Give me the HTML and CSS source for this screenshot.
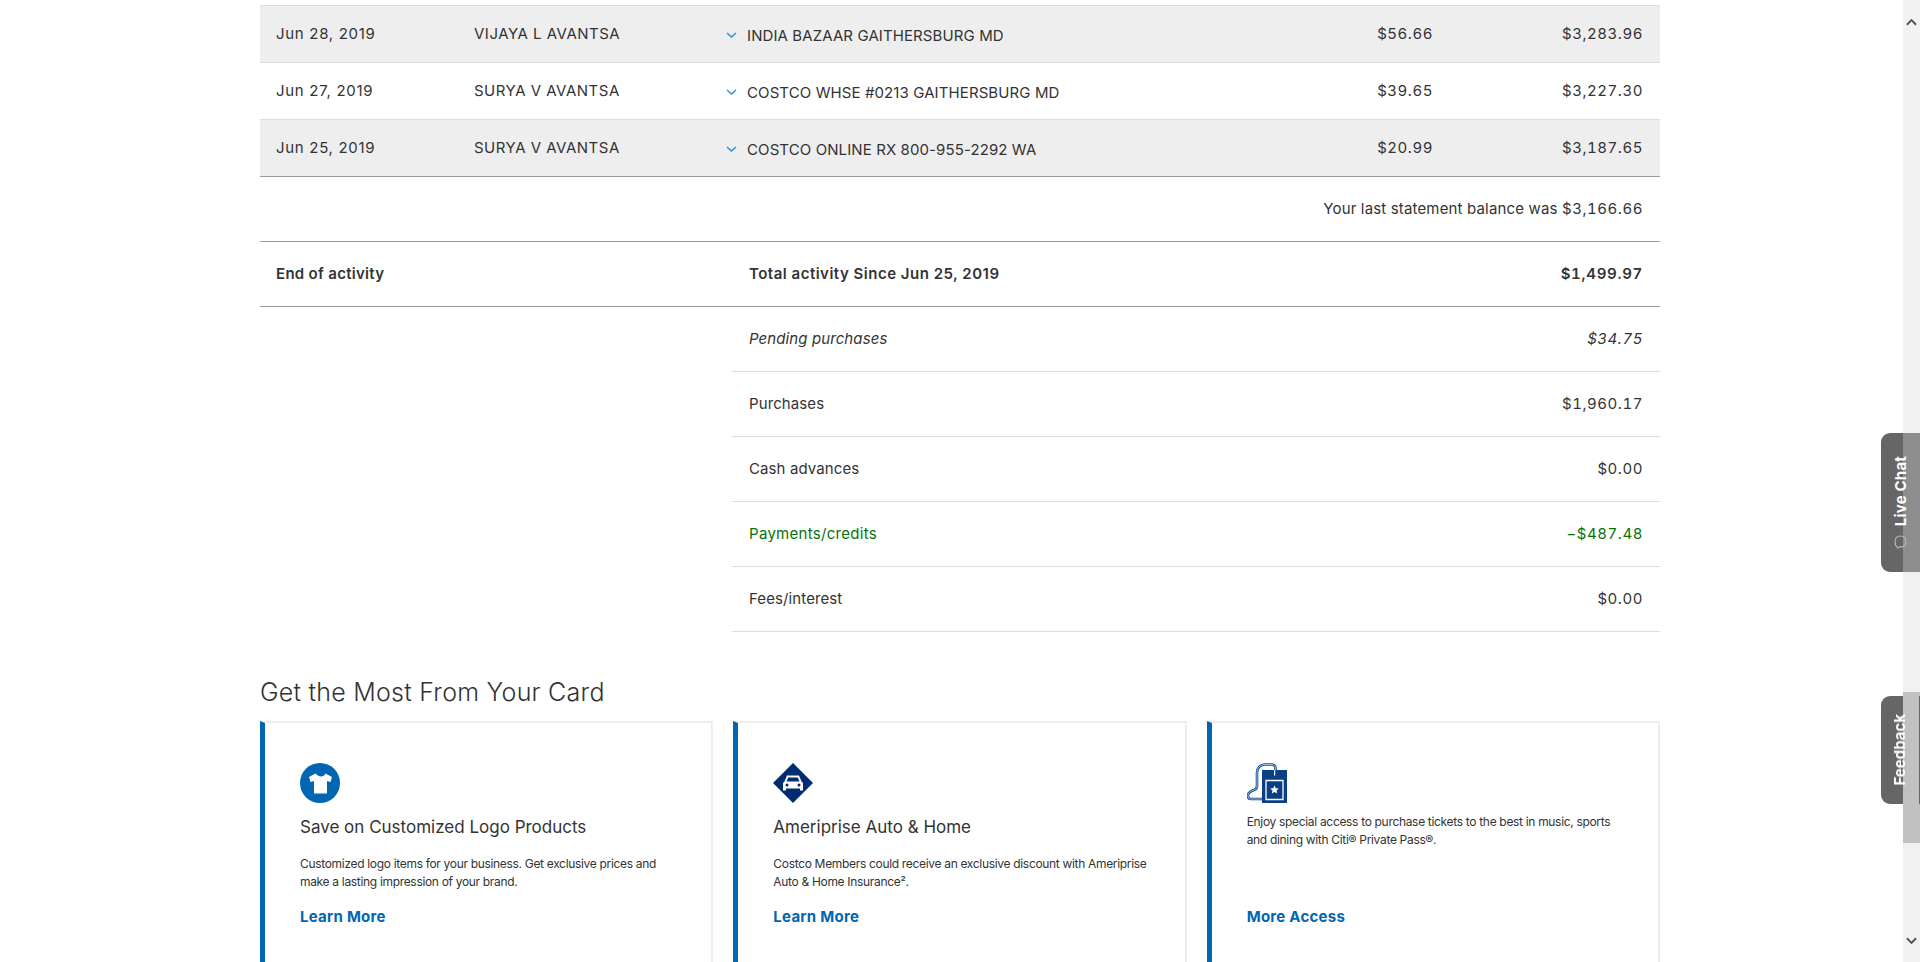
FILE: index.html
```html
<!DOCTYPE html>
<html lang="en">
<head>
    <meta charset="UTF-8">
    <title>Card Activity</title>
    <link rel="stylesheet" href="styles.css">
</head>
<body>

<div class="page">
    <main class="content">
        <!-- Posted transactions -->
        <div class="txn-list">
            <div class="txn-row shaded">
                <span class="txn-date">Jun 28, 2019</span>
                <span class="txn-name">VIJAYA L AVANTSA</span>
                <span class="txn-desc">
                    <svg class="chevron" viewBox="0 0 11 6"><path d="M1 1l4.500 4 4.500-4"/></svg>
                    INDIA BAZAAR GAITHERSBURG MD
                </span>
                <span class="txn-amount">$56.66</span>
                <span class="txn-balance">$3,283.96</span>
            </div>
            <div class="txn-row">
                <span class="txn-date">Jun 27, 2019</span>
                <span class="txn-name">SURYA V AVANTSA</span>
                <span class="txn-desc">
                    <svg class="chevron" viewBox="0 0 11 6"><path d="M1 1l4.500 4 4.500-4"/></svg>
                    COSTCO WHSE #0213 GAITHERSBURG MD
                </span>
                <span class="txn-amount">$39.65</span>
                <span class="txn-balance">$3,227.30</span>
            </div>
            <div class="txn-row shaded last">
                <span class="txn-date">Jun 25, 2019</span>
                <span class="txn-name">SURYA V AVANTSA</span>
                <span class="txn-desc">
                    <svg class="chevron" viewBox="0 0 11 6"><path d="M1 1l4.500 4 4.500-4"/></svg>
                    COSTCO ONLINE RX 800-955-2292 WA
                </span>
                <span class="txn-amount">$20.99</span>
                <span class="txn-balance">$3,187.65</span>
            </div>
        </div>

        <div class="statement-row">Your last statement balance was <span class="money">$3,166.66</span></div>

        <div class="total-row">
            <span class="total-end">End of activity</span>
            <span class="total-label">Total activity Since Jun 25, 2019</span>
            <span class="total-value">$1,499.97</span>
        </div>

        <!-- Activity summary -->
        <div class="summary">
            <div class="summary-row pending"><span>Pending purchases</span><span class="money">$34.75</span></div>
            <div class="summary-row"><span>Purchases</span><span class="money">$1,960.17</span></div>
            <div class="summary-row"><span>Cash advances</span><span class="money">$0.00</span></div>
            <div class="summary-row credit"><span>Payments/credits</span><span class="money">&minus;$487.48</span></div>
            <div class="summary-row"><span>Fees/interest</span><span class="money">$0.00</span></div>
        </div>

        <h2 class="offers-title">Get the Most From Your Card</h2>

        <div class="offers">
            <div class="offer-card">
                <svg class="offer-icon" viewBox="0 0 40 40">
                    <circle cx="20" cy="20" r="20" fill="#0066b2"/>
                    <path fill="#fff" d="M15.500 10.500l-6.500 3.500 1.500 5 3.500-1v12.500h13V18l3.500 1 1.500-5-6.500-3.500c-1 2-2.500 3-4.500 3s-3.500-1-5.500-3z"/>
                </svg>
                <div class="offer-body">
                    <h3>Save on Customized Logo Products</h3>
                    <p>Customized logo items for your business. Get exclusive prices and make a lasting impression of your brand.</p>
                </div>
                <a class="offer-link" href="#">Learn More</a>
            </div>
            <div class="offer-card">
                <svg class="offer-icon" viewBox="0 0 40 40">
                    <path fill="#002d72" d="M20 0l20 20-20 20L0 20z"/>
                    <path fill="#fff" d="M14 12.500h12l2.500 6c1 .5 1.500 1.500 1.500 2.500v6.500h-3v-2H13v2h-3V21c0-1 .5-2 1.500-2.500zm1.200 2l-1.700 4h13l-1.700-4z"/>
                    <circle cx="14" cy="22" r="1.500" fill="#002d72"/>
                    <circle cx="26" cy="22" r="1.500" fill="#002d72"/>
                </svg>
                <div class="offer-body">
                    <h3>Ameriprise Auto &amp; Home</h3>
                    <p>Costco Members could receive an exclusive discount with Ameriprise Auto &amp; Home Insurance&sup2;.</p>
                </div>
                <a class="offer-link" href="#">Learn More</a>
            </div>
            <div class="offer-card">
                <svg class="offer-icon" viewBox="0 0 40 40">
                    <path fill="none" stroke="#0b4a92" stroke-width="2.600" d="M15 36H4c-2.500 0-3-1.500-3-3.500 0-3 3-4.500 6-5.500 2-.7 3-2 3-4V10c0-5 3-8.500 8-8.500h6c3 0 4.500 1.500 4.500 4V12"/>
                    <path fill="none" stroke="#cfdcec" stroke-width=".8" d="M15 36H4c-2.500 0-3-1.500-3-3.500 0-3 3-4.500 6-5.500 2-.7 3-2 3-4V10c0-5 3-8.500 8-8.500h6c3 0 4.500 1.500 4.500 4V12"/>
                    <path fill="#0b3f85" d="M15 7h25v33H15z"/>
                    <path fill="#fff" d="M27 7h1.200v5.500H27z"/>
                    <path fill="none" stroke="#fff" stroke-width="1.300" d="M19 17.500h17v19H19z"/>
                    <path fill="#fff" d="M27.500 22.500l1.300 2.800 3 .3-2.300 2 .7 3-2.700-1.600-2.700 1.600.7-3-2.300-2 3-.3z"/>
                </svg>
                <div class="offer-body only-text">
                    <p>Enjoy special access to purchase tickets to the best in music, sports and dining with Citi&reg; Private Pass&reg;.</p>
                </div>
                <a class="offer-link" href="#">More Access</a>
            </div>
        </div>
    </main>

    <div class="scrollbar">
        <svg class="scroll-up" viewBox="0 0 12 8"><path d="M1 7l5-5 5 5"/></svg>
        <div class="scroll-thumb"></div>
        <svg class="scroll-down" viewBox="0 0 12 8"><path d="M1 1l5 5 5-5"/></svg>
    </div>
</div>

<!-- Side tabs sit on top of the scrollbar -->
<div class="side-tab chat-tab">
    <span>Live Chat</span>
    <svg class="chat-icon" viewBox="0 0 12 13"><path d="M3 11.500C1.500 10.500 1 9 1 6.500 1 3 3 1 6 1s5 2 5 5.500c0 2.500-1.500 4.500-4 4.500H5l-2 1.500"/></svg>
</div>
<div class="side-tab feedback-tab"><span>Feedback</span></div>

</body>
</html>
```

FILE: styles.css
```css
* {
    box-sizing: border-box;
}
html, body {
    margin: 0;
    height: 100%;
    overflow: hidden;
}
body {
    font-family: Inter, "Open Sans", Arial, sans-serif;
    font-size: 15px;
    color: #333;
    background-color: #fff;
}
.page {
    display: flex;
    height: 962px;
}
.content {
    flex: 1;
    height: 962px;
    overflow: hidden;
    padding: 5px 243px 0 260px;
}
.money {
    font-variant-numeric: tabular-nums;
    letter-spacing: 0.55px;
}

/* transactions */
.txn-list {
    border-top: 1px solid #ddd;
}
.txn-row {
    display: grid;
    grid-template-columns: 198px 252px 1fr 100px 210px;
    align-items: center;
    height: 57px;
    padding: 0 17px 0 16px;
    border-bottom: 1px solid #ddd;
}
.txn-row.shaded {
    background-color: #eee;
}
.txn-row.last {
    border-bottom-color: #999;
}
.txn-date, .txn-name {
    position: relative;
    top: -1px;
}
.txn-date {
    letter-spacing: 0.7px;
}
.txn-name {
    letter-spacing: 0.5px;
}
.txn-desc {
    display: flex;
    align-items: center;
    gap: 10px;
    position: relative;
    top: 1px;
    letter-spacing: 0.1px;
}
.chevron {
    width: 11px;
    height: 6px;
    fill: none;
    stroke: #2e8fd0;
    stroke-width: 1.500;
}
.txn-amount, .txn-balance {
    text-align: right;
    position: relative;
    top: -1px;
    font-variant-numeric: tabular-nums;
    letter-spacing: 0.55px;
}

/* statement and totals */
.statement-row {
    height: 65px;
    padding-right: 17px;
    line-height: 64px;
    letter-spacing: 0.16px;
    text-align: right;
    border-bottom: 1px solid #999;
}
.total-row {
    display: flex;
    align-items: center;
    height: 65px;
    padding: 0 17px 2px 0;
    font-weight: 600;
    border-bottom: 1px solid #999;
}
.total-end {
    width: 489px;
    padding-left: 16px;
    letter-spacing: 0.3px;
}
.total-label {
    flex: 1;
    letter-spacing: 0.5px;
}
.total-value {
    font-variant-numeric: tabular-nums;
    letter-spacing: 0.7px;
}
.summary {
    margin-left: 472px;
}
.summary-row {
    display: flex;
    justify-content: space-between;
    align-items: center;
    height: 65px;
    padding: 0 17px 2px 17px;
    letter-spacing: 0.1px;
    border-bottom: 1px solid #ddd;
}
.summary-row.pending {
    font-style: italic;
}
.summary-row.credit {
    color: #067306;
    letter-spacing: 0.3px;
}

/* offers */
.offers-title {
    margin: 45px 0 13px;
    font-size: 25px;
    font-weight: 300;
    line-height: 31px;
    letter-spacing: 0.25px;
    color: #333;
}
.offers {
    display: grid;
    grid-template-columns: repeat(3, 1fr);
    gap: 20px;
}
.offer-card {
    display: flex;
    flex-direction: column;
    align-items: flex-start;
    height: 300px;
    padding: 40px 30px 0 35px;
    border: 2px solid #eee;
    border-left: 5px solid #0066b2;
}
.offer-icon {
    width: 40px;
    height: 40px;
    flex-shrink: 0;
}
.offer-body {
    height: 104px;
    padding-top: 11px;
}
.offer-body.only-text {
    padding-top: 10px;
}
.offer-body h3 {
    margin: 0 0 15px;
    font-size: 17px;
    font-weight: 400;
    line-height: 26px;
}
.offer-body p {
    margin: 0;
    font-size: 12px;
    line-height: 18px;
    letter-spacing: -0.32px;
}
.offer-body sup {
    font-size: 9px;
}
.offer-link {
    font-size: 15px;
    font-weight: 700;
    line-height: 20px;
    letter-spacing: 0.25px;
    color: #0066b2;
    text-decoration: none;
}

/* scrollbar drawn by hand so it always shows */
.scrollbar {
    position: relative;
    width: 17px;
    background-color: #f1f1f1;
}
.scroll-thumb {
    position: absolute;
    top: 692px;
    left: 0;
    width: 17px;
    height: 151px;
    background-color: #c1c1c1;
}
.scroll-up, .scroll-down {
    position: absolute;
    left: 3px;
    width: 11px;
    height: 8px;
    fill: none;
    stroke: #505050;
    stroke-width: 2;
}
.scroll-up {
    top: 18px;
}
.scroll-down {
    top: 937px;
}

/* side tabs */
.side-tab {
    position: fixed;
    right: 0;
    display: flex;
    align-items: center;
    justify-content: center;
    flex-direction: column;
    border-radius: 9px 0 0 9px;
    color: #fff;
    font-size: 15px;
    font-weight: 700;
}
.side-tab span {
    writing-mode: vertical-rl;
    transform: rotate(180deg);
}
.chat-tab {
    top: 433px;
    width: 39px;
    height: 139px;
    background: linear-gradient(to right, #666 22px, #8e8e8e 22px);
    padding-right: 1px;
    gap: 8px;
    letter-spacing: 0.2px;
}
.chat-icon {
    width: 13px;
    height: 14px;
    fill: none;
    stroke: #bbb;
    stroke-width: 1;
}
.feedback-tab {
    top: 696px;
    width: 39px;
    height: 108px;
    background: linear-gradient(to right, #666 22px, transparent 22px, transparent 38px, #666 38px);
    padding-right: 2px;
}
```
